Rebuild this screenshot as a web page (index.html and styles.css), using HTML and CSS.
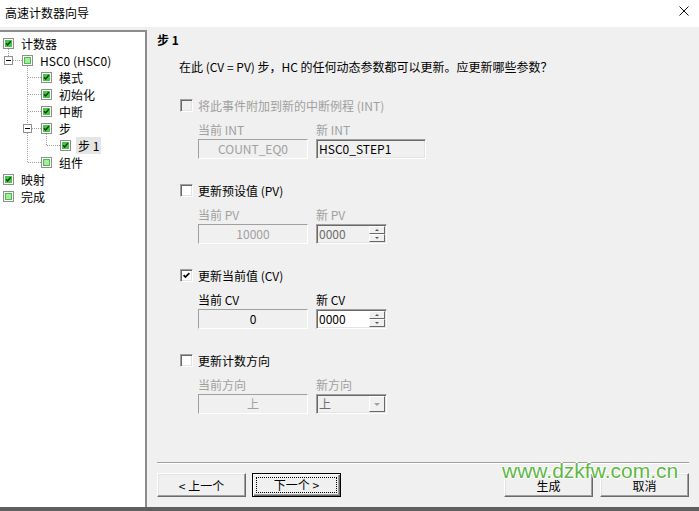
FILE: index.html
```html
<!DOCTYPE html>
<html lang="zh">

<head>
    <meta charset="utf-8">
    <title>高速计数器向导</title>
    <link rel="stylesheet" href="styles.css">
</head>

<body>
    <svg width="0" height="0" class="defs">
        <symbol id="cb-on" viewBox="0 0 11 11">
            <rect x=".5" y=".5" width="10" height="10" fill="#fff" stroke="#8e8f8f" />
            <rect x="2" y="2" width="7" height="7" fill="#46c846" />
            <path d="M3 5.3l1.6 1.6 3.2-3.6" fill="none" stroke="#143a14" stroke-width="1.4" />
        </symbol>
        <symbol id="cb-part" viewBox="0 0 11 11">
            <rect x=".5" y=".5" width="10" height="10" fill="#fff" stroke="#8e8f8f" />
            <rect x="2.5" y="2.5" width="6" height="6" fill="#a8e8a2" stroke="#45c045" />
        </symbol>
    </svg>

    <div class="titlebar">
        <span class="title">高速计数器向导</span>
        <svg class="close" viewBox="0 0 10 10">
            <path d="M0.5 0.5L9.5 9.5M9.5 0.5L0.5 9.5" stroke="#111" stroke-width="1" />
        </svg>
    </div>

    <div class="main">
        <div class="tree">
            <!-- dotted connectors of the tree -->
            <svg class="lines" width="145" height="200">
                <path d="M8.5 17V24M13 28.5H22M27.5 34V92M27.5 101V130.5M28 45.5H41M28 62.5H41M28 79.5H41M32 96.5H41M28 130.5H41M46.5 102V113.5M47 113.5H60" />
            </svg>
            <div class="node"><svg class="ico"><use href="#cb-on" /></svg>计数器</div>
            <div class="node l1"><span class="exp"></span><svg class="ico"><use href="#cb-part" /></svg>HSC0 (HSC0)</div>
            <div class="node l2"><svg class="ico"><use href="#cb-on" /></svg>模式</div>
            <div class="node l2"><svg class="ico"><use href="#cb-on" /></svg>初始化</div>
            <div class="node l2"><svg class="ico"><use href="#cb-on" /></svg>中断</div>
            <div class="node l2"><span class="exp"></span><svg class="ico"><use href="#cb-on" /></svg>步</div>
            <div class="node l3"><svg class="ico"><use href="#cb-on" /></svg><span class="sel">步 1</span></div>
            <div class="node l2"><svg class="ico"><use href="#cb-part" /></svg>组件</div>
            <div class="node"><svg class="ico"><use href="#cb-on" /></svg>映射</div>
            <div class="node"><svg class="ico"><use href="#cb-part" /></svg>完成</div>
        </div>

        <div class="page">
            <h1>步 1</h1>
            <p class="question">在此 (CV = PV) 步，HC 的任何动态参数都可以更新。应更新哪些参数？</p>

            <section class="group">
                <div class="check off"><span class="box"></span>将此事件附加到新的中断例程 (INT)</div>
                <div class="fields off">
                    <div class="field"><span class="cap">当前 INT</span><div class="static">COUNT_EQ0</div></div>
                    <div class="field"><span class="cap">新 INT</span><div class="edit wide">HSC0_STEP1</div></div>
                </div>
            </section>

            <section class="group">
                <div class="check"><span class="box"></span>更新预设值 (PV)</div>
                <div class="fields off">
                    <div class="field"><span class="cap">当前 PV</span><div class="static">10000</div></div>
                    <div class="field"><span class="cap">新 PV</span>
                        <div class="edit spin"><span class="val">0000</span><span class="arrows"><i class="up"></i><i class="dn"></i></span></div>
                    </div>
                </div>
            </section>

            <section class="group">
                <div class="check"><span class="box on"><svg viewBox="0 0 11 11"><path d="M2 5l2.2 2.4L9 2.6" /></svg></span>更新当前值 (CV)</div>
                <div class="fields">
                    <div class="field"><span class="cap">当前 CV</span><div class="static">0</div></div>
                    <div class="field"><span class="cap">新 CV</span>
                        <div class="edit spin live"><span class="val">0000</span><span class="arrows"><i class="up"></i><i class="dn"></i></span></div>
                    </div>
                </div>
            </section>

            <section class="group">
                <div class="check"><span class="box"></span>更新计数方向</div>
                <div class="fields off">
                    <div class="field"><span class="cap">当前方向</span><div class="static">上</div></div>
                    <div class="field"><span class="cap">新方向</span>
                        <div class="edit spin combo"><span class="val">上</span><span class="arrows"><i class="dn"></i></span></div>
                    </div>
                </div>
            </section>

            <div class="footer">
                <div class="nav">
                    <button class="btn">&lt; 上一个</button>
                    <button class="btn default"><span>下一个 &gt;</span></button>
                </div>
                <div class="nav act">
                    <button class="btn">生成</button>
                    <button class="btn">取消</button>
                </div>
            </div>
        </div>
    </div>

    <div class="taskbar"></div>
    <div class="watermark">www.dzkfw.com.cn</div>
</body>

</html>
```

FILE: styles.css
```css
* {
    box-sizing: border-box;
}

html,
body {
    margin: 0;
}

body {
    position: relative;
    width: 699px;
    height: 511px;
    overflow: hidden;
    background-color: #f0f0f0;
    font-family: "Noto Sans CJK SC", "Liberation Sans", sans-serif;
    font-size: 12px;
    line-height: 15px;
    color: #000;
}

.defs {
    position: absolute;
}

.titlebar {
    height: 27px;
    display: flex;
    justify-content: space-between;
    align-items: flex-start;
    padding: 5px 10px 0 5px;
    background-color: #fff;
}

.close {
    width: 10px;
    height: 10px;
    margin-top: 1px;
}

.main {
    display: flex;
    height: 480px;
}

/* left tree */

.tree {
    position: relative;
    width: 147px;
    margin-top: 3px;
    padding-top: 3px;
    background-color: #fff;
    border-top: 2px solid #8c8c8c;
    border-right: 2px solid #8c8c8c;
}

.lines {
    position: absolute;
    left: 0;
    top: 0;
}

.lines path {
    fill: none;
    stroke: #a0a0a0;
    stroke-width: 1;
    stroke-dasharray: 1 1;
    shape-rendering: crispEdges;
}

.node {
    position: relative;
    display: flex;
    align-items: center;
    height: 17px;
    padding-left: 3px;
    white-space: nowrap;
}

.l1 {
    padding-left: 22px;
}

.l2 {
    padding-left: 41px;
}

.l3 {
    padding-left: 60px;
}

.ico {
    flex: none;
    width: 11px;
    height: 11px;
    margin-right: 7px;
}

.exp {
    position: relative;
    flex: none;
    width: 9px;
    height: 9px;
    margin-left: -18px;
    margin-right: 9px;
    border: 1px solid #919191;
    background-color: #fff;
}

.exp::after {
    content: "";
    position: absolute;
    left: 1px;
    top: 3px;
    width: 5px;
    height: 1px;
    background-color: #000;
}

.sel {
    margin-left: -2px;
    padding: 0 2px;
    line-height: 17px;
    background-color: #e5e5e5;
}

/* right page */

.page {
    flex: 1;
    display: flex;
    flex-direction: column;
    padding: 5px 10px 10px;
}

h1 {
    margin: 0;
    font-size: 12px;
    line-height: 15px;
    font-weight: bold;
}

.question {
    margin: 12px 0 0 22px;
}

.group {
    margin: 24px 0 0 23px;
}

.check {
    display: flex;
    align-items: center;
    gap: 5px;
    height: 15px;
}

.off {
    color: #a0a0a0;
}

.box {
    flex: none;
    width: 13px;
    height: 13px;
    padding: 1px;
    background-color: #fff;
    border: 1px solid;
    border-color: #a0a0a0 #fff #fff #a0a0a0;
    box-shadow: inset 1px 1px #696969, inset -1px -1px #e3e3e3;
}

.check.off .box {
    background-color: #f0f0f0;
}

.box svg {
    display: block;
    width: 9px;
    height: 9px;
}

.box path {
    fill: none;
    stroke: #000;
    stroke-width: 2;
}

.fields {
    display: grid;
    grid-template-columns: 110px 110px;
    column-gap: 8px;
    margin: 9px 0 0 18px;
}

.field {
    display: flex;
    flex-direction: column;
    align-items: flex-start;
}

.static,
.edit {
    width: 110px;
    height: 20px;
    margin-top: 2px;
    border: 1px solid;
    border-color: #a0a0a0 #fff #fff #a0a0a0;
    line-height: 18px;
    white-space: nowrap;
}

.static {
    text-align: center;
}

.edit {
    padding: 1px 1px 1px 2px;
    line-height: 16px;
    color: #000;
    box-shadow: inset 1px 1px #696969, inset -1px -1px #e3e3e3;
}

.spin {
    display: flex;
    width: 71px;
}

.off .spin {
    color: #6d6d6d;
}

.spin.live {
    background-color: #fff;
}

.val {
    flex: 1;
}

.arrows {
    display: flex;
    flex-direction: column;
    width: 16px;
}

.arrows i {
    position: relative;
    flex: 1;
    border: 1px solid;
    border-color: #fff #696969 #696969 #fff;
    background-color: #f0f0f0;
}

.arrows i::after {
    content: "";
    position: absolute;
    left: 50%;
    top: 50%;
    margin: -1px 0 0 -2px;
    border-left: 2px solid transparent;
    border-right: 2px solid transparent;
}

.arrows .up::after {
    border-bottom: 2px solid #555;
}

.arrows .dn::after {
    border-top: 2px solid #555;
}

.combo .arrows i::after {
    margin: -1px 0 0 -3px;
    border-left-width: 3px;
    border-right-width: 3px;
    border-top: 3px solid #a0a0a0;
}

/* buttons */

.footer {
    display: flex;
    justify-content: space-between;
    margin-top: auto;
    padding-top: 10px;
    border-top: 1px solid #a0a0a0;
    box-shadow: inset 0 1px #fff;
}

.nav {
    display: flex;
    gap: 6px;
}

.act {
    gap: 7px;
}

.btn {
    width: 89px;
    height: 24px;
    padding: 0;
    font: inherit;
    color: #000;
    background-color: #f0f0f0;
    border: 1px solid;
    border-color: #fff #696969 #696969 #fff;
    box-shadow: inset -1px -1px #a0a0a0, inset 1px 1px #e3e3e3;
}

.btn.default {
    border: 1px solid #000;
    box-shadow: inset 1px 1px #fff, inset -1px -1px #696969, inset -2px -2px #a0a0a0;
    padding: 3px;
}

.btn.default span {
    display: block;
    height: 16px;
    line-height: 14px;
    border: 1px dotted #000;
}

.taskbar {
    height: 4px;
    background-color: #5f5f5f;
}

.watermark {
    position: absolute;
    left: 502px;
    top: 459px;
    font-family: "Liberation Sans", sans-serif;
    font-size: 21px;
    line-height: 24px;
    color: #5fb845;
    text-shadow: 1px 0 #fff, -1px 0 #fff, 0 1px #fff, 0 -1px #fff;
}
```
